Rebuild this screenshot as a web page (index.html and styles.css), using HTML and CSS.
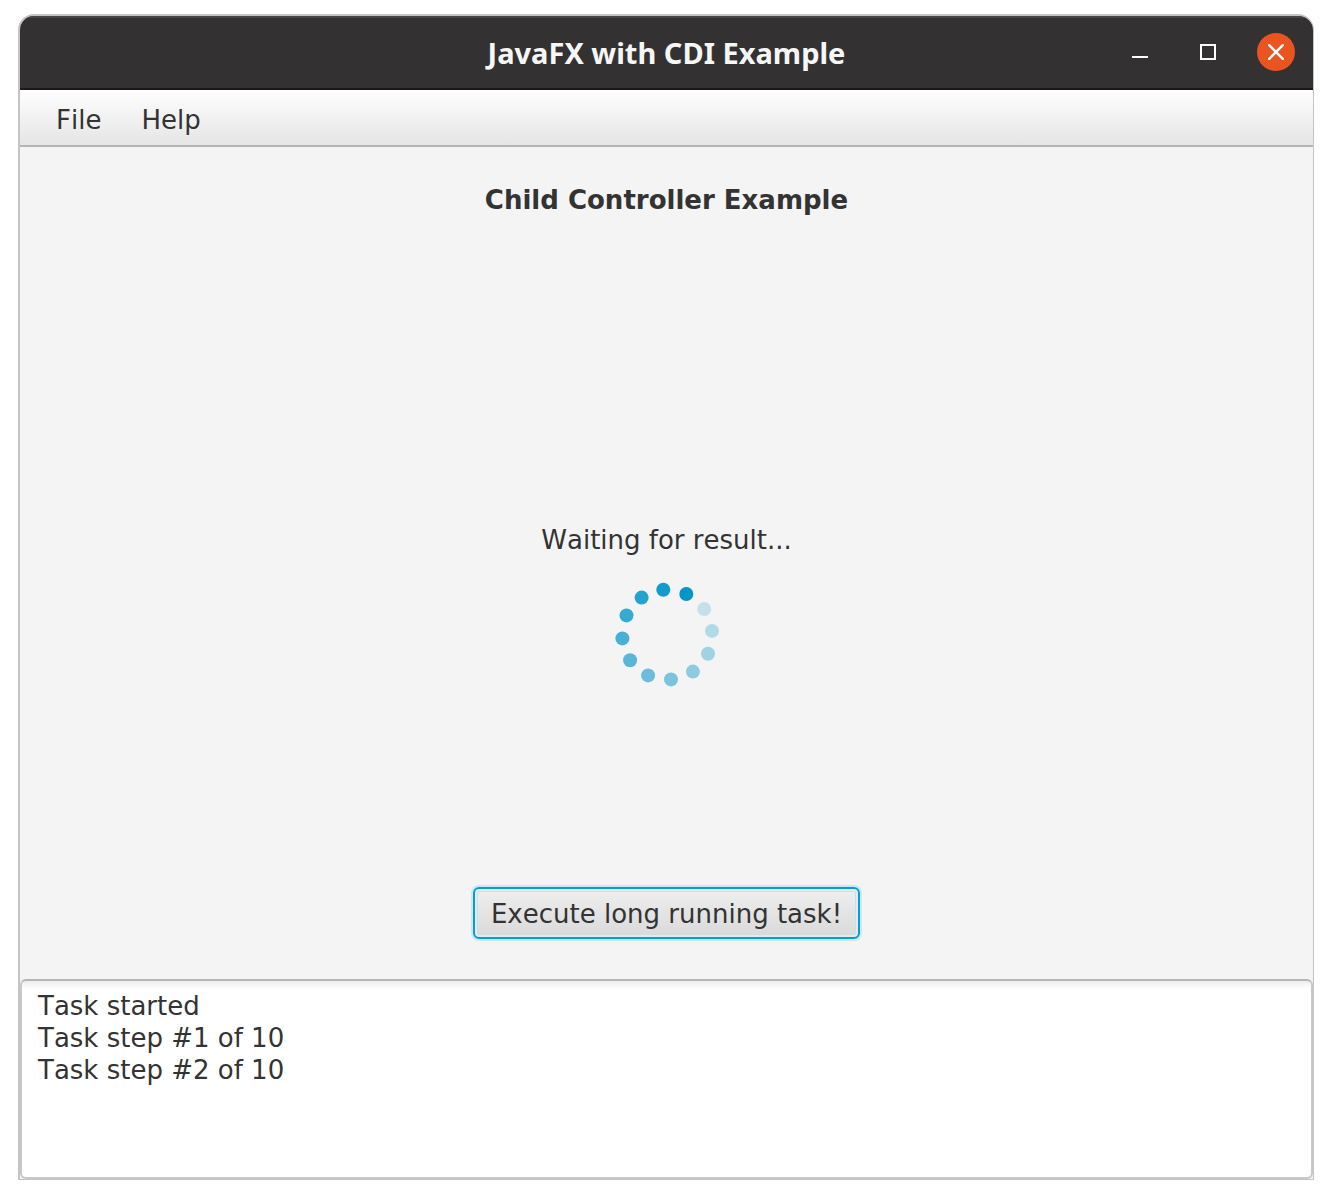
FILE: index.html
```html
<!DOCTYPE html>
<html lang="en">
<head>
<meta charset="utf-8">
<meta name="viewport" content="width=device-width, initial-scale=1">
<title>JavaFX with CDI Example</title>
<link rel="stylesheet" href="styles.css">
</head>
<body>
<div class="window">
  <header class="titlebar">
    <h1 class="title">JavaFX with CDI Example</h1>
    <div class="controls">
      <button class="control" type="button" aria-label="Minimize">
        <svg width="16" height="16" viewBox="0 0 16 16"><path d="M0 13H16" stroke="#fff" stroke-width="2"/></svg>
      </button>
      <button class="control" type="button" aria-label="Maximize">
        <svg width="16" height="16" viewBox="0 0 16 16"><rect x="1" y="1" width="14" height="14" fill="none" stroke="#fff" stroke-width="2"/></svg>
      </button>
      <button class="control control-close" type="button" aria-label="Close">
        <svg width="16" height="16" viewBox="0 0 16 16"><path d="M1.2 1.2L14.8 14.8M14.8 1.2L1.2 14.8" stroke="#fff" stroke-width="2.4" stroke-linecap="round"/></svg>
      </button>
    </div>
  </header>
  <nav class="menubar">
    <button class="menu" type="button">File</button>
    <button class="menu" type="button">Help</button>
  </nav>
  <main class="content">
    <h2 class="heading">Child Controller Example</h2>
    <div class="status" role="status">
      <p class="message">Waiting for result...</p>
      <svg class="spinner" width="105" height="106" viewBox="0 0 105 106" aria-hidden="true">
        <circle cx="72.3" cy="12" r="7" fill="#0096c9"/>
        <circle cx="49.3" cy="7.8" r="7" fill="#129ccb"/>
        <circle cx="27.6" cy="15.6" r="7" fill="#24a3cf"/>
        <circle cx="12.5" cy="33.4" r="7" fill="#35aad3"/>
        <circle cx="8.4" cy="56.4" r="7" fill="#47b0d6"/>
        <circle cx="16.1" cy="78.2" r="7" fill="#59b6d8"/>
        <circle cx="34.1" cy="93.4" r="7" fill="#6bbddb"/>
        <circle cx="57" cy="97.4" r="7" fill="#7cc4de"/>
        <circle cx="78.9" cy="89.6" r="7" fill="#8ecbe0"/>
        <circle cx="94" cy="71.7" r="7" fill="#9fd2e3"/>
        <circle cx="98" cy="48.9" r="7" fill="#b0dae7"/>
        <circle cx="90.2" cy="27" r="7" fill="#c4e1eb"/>
      </svg>
    </div>
    <button class="execute" type="button">Execute long running task!</button>
  </main>
  <textarea class="log" aria-label="Task log" readonly>Task started
Task step #1 of 10
Task step #2 of 10</textarea>
</div>
</body>
</html>
```
FILE: styles.css
```css
* {
  box-sizing: border-box;
}

body {
  margin: 0;
  min-height: 100vh;
  padding: 14px 19px 19px 18px;
  display: flex;
  background: #fff;
  color: #333;
  font: 26px/32px "DejaVu Sans", sans-serif;
}

body,
button,
textarea {
  font-kerning: none;
  font-variant-ligatures: none;
}

button,
textarea {
  font-family: inherit;
  font-size: inherit;
  line-height: inherit;
  color: inherit;
}

.window {
  flex: 1;
  display: flex;
  flex-direction: column;
  border: 2px solid #c4c4c4;
  border-right-width: 1px;
  border-bottom-width: 1px;
  border-radius: 16px 16px 0 0;
  background: #f4f4f4;
  overflow: hidden;
}

.titlebar {
  display: grid;
  grid-template-columns: 1fr auto 1fr;
  align-items: center;
  height: 74px;
  padding: 0 18px 2px;
  background: #333131;
  border-top: 2px solid #474545;
  border-bottom: 2px solid #1c1b1b;
}

.title {
  grid-column: 2;
  margin: 0;
  padding-top: 2px;
  color: #f6f6f6;
  font: bold 29px/40px "Noto Sans", sans-serif;
}

.controls {
  justify-self: end;
  display: flex;
  gap: 30px;
}

.control {
  width: 38px;
  height: 38px;
  padding: 0;
  display: grid;
  place-items: center;
  border: 0;
  border-radius: 50%;
  background: none;
}

.control-close {
  background: #e95420;
}

.menubar {
  display: flex;
  height: 57px;
  padding: 0 16px;
  background: linear-gradient(#fdfdfd, #e5e5e5);
  border-top: 2px solid #fff;
  border-bottom: 2px solid #b5b5b5;
}

.menu {
  padding: 2px 20px 0;
  border: 0;
  background: none;
}

.content {
  flex: 1;
  display: flex;
  flex-direction: column;
  align-items: center;
  padding: 37px 16px 40px;
}

.heading,
.message {
  margin: 0;
  font-size: 26px;
}

.status {
  flex: 1;
  display: flex;
  flex-direction: column;
  align-items: center;
  justify-content: center;
  gap: 26px;
  padding-top: 108px;
}

.spinner {
  display: block;
}

.execute {
  height: 52px;
  padding: 2px 16px 0;
  border: 2px solid #039ed3;
  border-radius: 6px;
  background: linear-gradient(#efefef, #d9d9d9);
  box-shadow: 0 0 0 2px #cde7f0, inset 0 0 0 2px #e6eaec, inset 0 0 0 3px #cbdfe6, inset 0 -3px 0 #c0d5de;
}

.log {
  display: block;
  width: 100%;
  height: 200px;
  padding: 9px 16px;
  border: 2px solid #c8c8c8;
  border-top-color: #b5b5b5;
  border-radius: 6px;
  background: linear-gradient(#ededed, #fff 8px);
  outline: 0;
  resize: none;
}
```
